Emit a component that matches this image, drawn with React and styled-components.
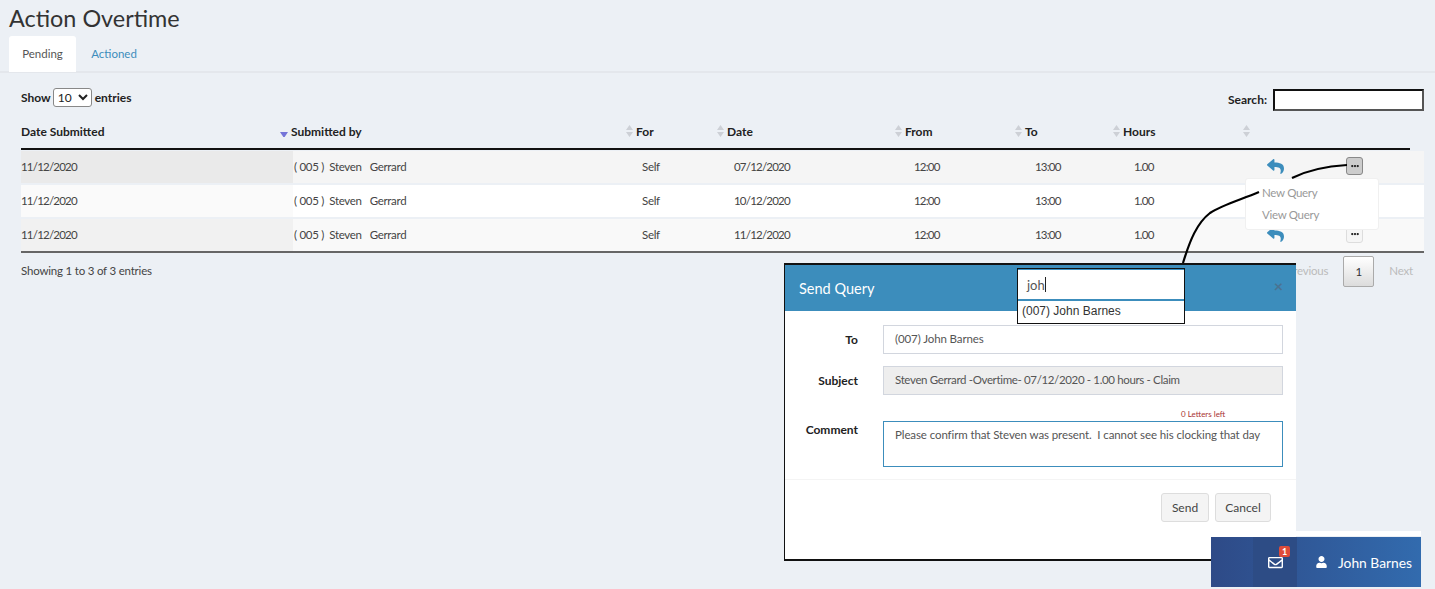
import React from 'react';
import styled, { createGlobalStyle } from 'styled-components';
import { FaReply, FaRegEnvelope, FaUser, FaEllipsisH } from 'react-icons/fa';

const GlobalStyle = createGlobalStyle`
  html, body {
    margin: 0;
    height: 589px;
    overflow: hidden;
    background: #ecf0f5;
    font-family: Lato, "Open Sans", sans-serif;
    font-size: 11.5px;
    letter-spacing: -0.2px;
    color: #333;
  }
`;

const Page = styled.div`
  position: relative;
  width: 1435px;
  height: 589px;
  overflow: hidden;
`;

const Title = styled.h1`
  margin: 0;
  padding: 5px 0 0 9px;
  height: 36px;
  box-sizing: border-box;
  font-size: 23.4px;
  line-height: 27px;
  font-weight: 400;
  letter-spacing: 0;
  color: #333;
`;

const Tabs = styled.div`
  display: flex;
  height: 35px;
  padding-left: 9px;
  border-bottom: 2px solid #e4e7ec;
`;

const Tab = styled.div`
  display: flex;
  align-items: center;
  justify-content: center;
  box-sizing: border-box;
  height: 36px;
  padding-bottom: 2px;
  letter-spacing: 0;
  width: ${p => (p.$active ? '67px' : '76px')};
  background: ${p => (p.$active ? '#fff' : 'transparent')};
  color: ${p => (p.$active ? '#555' : '#3c8dbc')};
  border-radius: 3px 3px 0 0;
`;

const Content = styled.div`
  padding: 13px 11px 0 21px;
`;

const Controls = styled.div`
  display: flex;
  justify-content: space-between;
  align-items: center;
  height: 23px;
  font-size: 12px;
  font-weight: 700;
  letter-spacing: 0;
  color: #222;
`;

const ControlGroup = styled.label`
  display: flex;
  align-items: center;
  gap: 3px;
  margin-top: ${p => p.$offset || '0'};
`;

const PageSize = styled.select`
  width: 39px;
  height: 19px;
  margin-left: -1px;
  padding: 0;
  font: 400 12px Lato, sans-serif;
  color: #222;
  background: #fff;
  border: 1px solid #888;
  border-radius: 3px;
`;

const SearchInput = styled.input`
  box-sizing: border-box;
  width: 151px;
  height: 22px;
  margin-left: 3px;
  background: #fff;
  border: 2px solid #111;
  border-right-color: #555;
  border-bottom-color: #555;
`;

const HeadRow = styled.div`
  display: grid;
  grid-template-columns: 270px 345px 91px 178px 120px 98px 130px 157px;
  height: 30px;
  margin: 11px 14px 0 0;
  padding-bottom: 6px;
  align-items: center;
  box-sizing: border-box;
  border-bottom: 2px solid #111;
`;

const HeadCell = styled.div`
  display: flex;
  justify-content: space-between;
  align-items: center;
  padding-right: 3px;
  font-size: 12px;
  font-weight: 700;
  letter-spacing: 0;
  color: #222;
`;

const Row = styled.div`
  display: grid;
  grid-template-columns: 272px 348px 92px 180px 121px 99px 133px 79px 79px;
  height: 32px;
  margin-bottom: 2px;
  align-items: center;
  background: ${p => p.$bg};
`;

const Cell = styled.div`
  display: flex;
  align-items: center;
  box-sizing: border-box;
  height: 100%;
  padding-bottom: 2px;
  white-space: pre;
  color: #444;
  letter-spacing: ${p => (p.$num ? '-0.8px' : '-0.3px')};
  padding-left: ${p => (p.$first ? '0' : '1px')};
  background: ${p => p.$bg || 'transparent'};
`;

const Rows = styled.div`
  margin-top: 1px;
  border-bottom: 2px solid #666;
  height: 102px;
  box-sizing: border-box;
`;

const ReplyIcon = styled(FaReply)`
  width: 17px;
  height: 17px;
  color: #3c8dbc;
`;

const DotsButton = styled.span`
  display: flex;
  align-items: center;
  justify-content: center;
  box-sizing: border-box;
  width: 17px;
  height: 18px;
  border-radius: 3px;
  color: #222;
  font-size: 8px;
  background: ${p => (p.$open ? '#ccc' : '#f6f6f6')};
  border: 1px solid ${p => (p.$open ? '#888' : '#ddd')};
`;

const Footer = styled.div`
  display: flex;
  justify-content: space-between;
  align-items: center;
  height: 31px;
  margin-top: 3px;
  color: #444;
`;

const FooterText = styled.span`
  padding-bottom: 2px;
`;

const Pager = styled.div`
  display: flex;
  align-items: center;
  color: #bbb;
  padding-right: 11px;
  gap: 15px;
`;

const PagerCurrent = styled.span`
  display: flex;
  align-items: center;
  justify-content: center;
  box-sizing: border-box;
  width: 31px;
  height: 31px;
  color: #333;
  border: 1px solid #aaa;
  border-radius: 2px;
  background: linear-gradient(#fff, #dcdcdc);
`;

const Menu = styled.div`
  position: absolute;
  left: 1245px;
  top: 178px;
  box-sizing: border-box;
  width: 134px;
  height: 52px;
  padding: 3px 0 0 16px;
  background: #fff;
  border-radius: 3px;
  border: 1px solid #f0f0f0;
  color: #999;
  letter-spacing: -0.3px;
`;

const MenuItem = styled.div`
  height: 22px;
  line-height: 22px;
`;

const Modal = styled.div`
  position: absolute;
  left: 784px;
  top: 263px;
  width: 512px;
  height: 298px;
  box-sizing: border-box;
  background: #fff;
  border: solid #111;
  border-width: 2px 0 2px 1px;
`;

const ModalHead = styled.div`
  display: flex;
  justify-content: space-between;
  align-items: center;
  height: 46px;
  padding: 0 13px 0 14px;
  background: #3c8dbc;
  color: #fff;
  font-size: 14.5px;
  letter-spacing: 0;
`;

const Close = styled.span`
  color: #4a7391;
  font-size: 16px;
  font-weight: 700;
  margin-top: -5px;
`;

const ModalBody = styled.div`
  display: grid;
  grid-template-columns: 73px 400px;
  column-gap: 25px;
  padding: 14px 0 0 0;
`;

const FieldLabel = styled.div`
  text-align: right;
  font-size: 12px;
  font-weight: 700;
  letter-spacing: 0;
  color: #222;
  padding-top: ${p => p.$top || '7px'};
`;

const Field = styled.div`
  box-sizing: border-box;
  height: ${p => p.$height || '29px'};
  margin-bottom: ${p => p.$gap || '12px'};
  padding: 6px 11px;
  color: #555;
  white-space: pre;
  letter-spacing: ${p => p.$spacing || '-0.1px'};
  background: ${p => (p.$disabled ? '#eee' : '#fff')};
  border: 1px solid ${p => p.$border || '#d2d6de'};
`;

const Counter = styled.div`
  grid-column: 2;
  height: 14px;
  padding-left: 298px;
  margin-top: 12px;
  line-height: 14px;
  font-size: 8px;
  letter-spacing: 0;
  color: #a33;
`;

const ModalFoot = styled.div`
  display: flex;
  justify-content: flex-end;
  gap: 6px;
  margin-top: 12px;
  padding: 13px 25px 0 0;
  border-top: 1px solid #f4f4f4;
`;

const Button = styled.span`
  display: flex;
  align-items: center;
  justify-content: center;
  box-sizing: border-box;
  height: 29px;
  width: ${p => p.$width};
  font-size: 12px;
  letter-spacing: 0;
  color: #444;
  background: #f4f4f4;
  border: 1px solid #ddd;
  border-radius: 3px;
`;

const Lookup = styled.div`
  position: absolute;
  left: 1017px;
  top: 268px;
  width: 168px;
  height: 56px;
  box-sizing: border-box;
  background: #fff;
  border: 1.5px solid #111;
`;

const LookupInput = styled.div`
  display: flex;
  align-items: center;
  height: 29px;
  padding-left: 9px;
  color: #555;
  font-size: 13px;
  letter-spacing: 0;
  border-top: 1px solid #3c8dbc;
  border-bottom: 2px solid #3c8dbc;
`;

const Caret = styled.span`
  width: 1px;
  height: 15px;
  background: #222;
`;

const LookupOption = styled.div`
  padding: 3px 0 0 4px;
  font-family: "Liberation Sans", Arial, sans-serif;
  color: #333;
  font-size: 12px;
  letter-spacing: 0;
`;

const Strip = styled.div`
  position: absolute;
  left: 1211px;
  top: 531px;
  width: 210px;
  height: 5px;
  background: #fff;
`;

const ChatBar = styled.div`
  position: absolute;
  left: 1211px;
  top: 537px;
  width: 210px;
  height: 50px;
  display: flex;
  align-items: center;
  color: #fff;
  letter-spacing: 0;
  background: linear-gradient(90deg, #2e4a87, #326bae);
`;

const MailCell = styled.div`
  position: relative;
  display: flex;
  align-items: center;
  justify-content: center;
  width: 44px;
  height: 100%;
  margin-left: 42px;
  background: #2d4c85;
  font-size: 15px;
`;

const Badge = styled.span`
  position: absolute;
  left: 26px;
  top: 9px;
  width: 11px;
  height: 11px;
  display: flex;
  align-items: center;
  justify-content: center;
  font-size: 9px;
  font-weight: 700;
  border-radius: 2px;
  background: #dd4b39;
`;

const UserName = styled.div`
  display: flex;
  align-items: center;
  gap: 11px;
  margin-left: 19px;
  font-size: 13.8px;
`;

const UserIcon = styled(FaUser)`
  width: 11px;
  height: 12px;
`;

const Callouts = styled.svg`
  position: absolute;
  left: 0;
  top: 0;
  pointer-events: none;
`;

const SortIcon = ({ active }) =>
  active ? (
    <svg width="8" height="12" viewBox="0 0 8 12">
      <path d="M0 6 H8 L4 12 Z" fill="#7474d8" transform="translate(0 1)" />
    </svg>
  ) : (
    <svg width="7" height="12" viewBox="0 0 7 12">
      <path d="M3.5 0 L7 5 H0 Z M0 7 H7 L3.5 12 Z" fill="#cdd0d6" />
    </svg>
  );

const heads = ['Date Submitted', 'Submitted by', 'For', 'Date', 'From', 'To', 'Hours', ''];

const rows = [
  { bg: '#f5f5f5', sorted: '#eaeaea', date: '07/12/2020', reply: true, dots: true, open: true },
  { bg: '#fff', sorted: '#fafafa', date: '10/12/2020' },
  { bg: '#f9f9f9', sorted: '#f1f1f1', date: '11/12/2020', reply: true, dots: true },
];

export default function App() {
  return (
    <Page>
      <GlobalStyle />
      <Title>Action Overtime</Title>
      <Tabs>
        <Tab $active>Pending</Tab>
        <Tab>Actioned</Tab>
      </Tabs>
      <Content>
        <Controls>
          <ControlGroup>
            Show
            <PageSize defaultValue="10">
              <option>10</option>
              <option>25</option>
            </PageSize>
            entries
          </ControlGroup>
          <ControlGroup $offset="4px">
            Search:
            <SearchInput />
          </ControlGroup>
        </Controls>
        <HeadRow>
          {heads.map((h, i) => (
            <HeadCell key={i}>
              {h ? <span>{h}</span> : null}
              {i < 7 && <SortIcon active={i === 0} />}
            </HeadCell>
          ))}
        </HeadRow>
        <Rows>
          {rows.map((r, idx) => (
            <Row key={idx} $bg={r.bg}>
              <Cell $first $num $bg={r.sorted}>11/12/2020</Cell>
              <Cell>{'( 005 )  Steven   Gerrard'}</Cell>
              <Cell>Self</Cell>
              <Cell $num>{r.date}</Cell>
              <Cell $num>12:00</Cell>
              <Cell $num>13:00</Cell>
              <Cell $num>1.00</Cell>
              <Cell>{r.reply && <ReplyIcon />}</Cell>
              <Cell>
                {r.dots && (
                  <DotsButton $open={r.open}>
                    <FaEllipsisH />
                  </DotsButton>
                )}
              </Cell>
            </Row>
          ))}
        </Rows>
        <Footer>
          <FooterText>Showing 1 to 3 of 3 entries</FooterText>
          <Pager>
            <FooterText>Previous</FooterText>
            <PagerCurrent>1</PagerCurrent>
            <FooterText>Next</FooterText>
          </Pager>
        </Footer>
      </Content>

      <Menu>
        <MenuItem>New Query</MenuItem>
        <MenuItem>View Query</MenuItem>
      </Menu>

      <Modal>
        <ModalHead>
          Send Query
          <Close>×</Close>
        </ModalHead>
        <ModalBody>
          <FieldLabel>To</FieldLabel>
          <Field>(007) John Barnes</Field>
          <FieldLabel>Subject</FieldLabel>
          <Field $disabled $gap="0" $spacing="-0.35px">Steven Gerrard -Overtime- 07/12/2020 - 1.00 hours - Claim</Field>
          <Counter>0 Letters left</Counter>
          <FieldLabel $top="1px">Comment</FieldLabel>
          <Field $height="46px" $gap="0" $border="#3c8dbc">
            Please confirm that Steven was present.  I cannot see his clocking that day
          </Field>
        </ModalBody>
        <ModalFoot>
          <Button $width="48px">Send</Button>
          <Button $width="56px">Cancel</Button>
        </ModalFoot>
      </Modal>

      <Lookup>
        <LookupInput>
          joh
          <Caret />
        </LookupInput>
        <LookupOption>(007) John Barnes</LookupOption>
      </Lookup>

      <Callouts width="1435" height="589" fill="none" stroke="#000" strokeWidth="2.2">
        <path d="M1347 165 C1330 166 1310 169 1292 178" />
        <path d="M1259 192 C1240 200 1222 205 1210 213 C1197 223 1190 240 1183 263" />
      </Callouts>

      <Strip />
      <ChatBar>
        <MailCell>
          <FaRegEnvelope />
          <Badge>1</Badge>
        </MailCell>
        <UserName>
          <UserIcon />
          John Barnes
        </UserName>
      </ChatBar>
    </Page>
  );
}
